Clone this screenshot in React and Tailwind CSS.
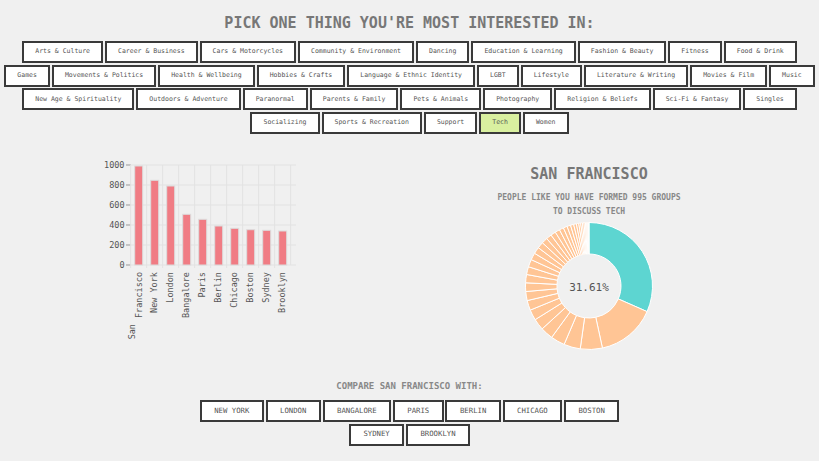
import React from 'react';

const topicRows = [
  ['Arts & Culture', 'Career & Business', 'Cars & Motorcycles', 'Community & Environment', 'Dancing', 'Education & Learning', 'Fashion & Beauty', 'Fitness', 'Food & Drink'],
  ['Games', 'Movements & Politics', 'Health & Wellbeing', 'Hobbies & Crafts', 'Language & Ethnic Identity', 'LGBT', 'Lifestyle', 'Literature & Writing', 'Movies & Film', 'Music'],
  ['New Age & Spirituality', 'Outdoors & Adventure', 'Paranormal', 'Parents & Family', 'Pets & Animals', 'Photography', 'Religion & Beliefs', 'Sci-Fi & Fantasy', 'Singles'],
  ['Socializing', 'Sports & Recreation', 'Support', 'Tech', 'Women']
];

const cities = [
  { name: 'San Francisco', value: 990 },
  { name: 'New York', value: 847 },
  { name: 'London', value: 790 },
  { name: 'Bangalore', value: 507 },
  { name: 'Paris', value: 457 },
  { name: 'Berlin', value: 390 },
  { name: 'Chicago', value: 367 },
  { name: 'Boston', value: 353 },
  { name: 'Sydney', value: 347 },
  { name: 'Brooklyn', value: 340 }
];

const compareRows = [
  ['New York', 'London', 'Bangalore', 'Paris', 'Berlin', 'Chicago', 'Boston'],
  ['Sydney', 'Brooklyn']
];

// share of groups per city, first slice is the selected city
const slices = [
  31.61, 15, 5.6, 4.2, 3.6, 3.2, 2.9, 2.7, 2.5, 2.3, 2.2, 2.1, 2.0, 1.9, 1.8, 1.7, 1.6,
  1.5, 1.4, 1.3, 1.2, 1.1, 1.0, 0.9, 0.8, 0.7, 0.6, 0.5, 0.45, 0.4, 0.35, 0.3, 0.25, 0.2, 0.14
];

const font = { fontFamily: '"DejaVu Sans Mono", "Liberation Mono", monospace' };

const BarChart = () => {
  const base = 109;
  const left = 35.7;
  return (
    <svg width="215" height="190" className="block">
      {[0, 200, 400, 600, 800, 1000].map((t) => (
        <g key={t}>
          <line x1="35.7" x2="201" y1={base - t / 10} y2={base - t / 10} stroke="#e2e2e2" strokeWidth="1" />
          <line x1="31" x2="35.7" y1={base - t / 10} y2={base - t / 10} stroke="#999" strokeWidth="1" />
          <text x="29.5" y={base - t / 10} textAnchor="end" dominantBaseline="central" fontSize="8.5" fill="#555" style={font}>
            {t}
          </text>
        </g>
      ))}
      {cities.map((c, i) => (
        <line key={'g' + i} x1={left + 16 * i} x2={left + 16 * i} y1="9" y2={base + 3} stroke="#e2e2e2" strokeWidth="1" />
      ))}
      <line x1={left + 160} x2={left + 160} y1="9" y2={base} stroke="#e2e2e2" strokeWidth="1" />
      {cities.map((c, i) => (
        <rect
          key={c.name}
          x={left + 4 + 16 * i}
          y={base - c.value / 10}
          width="8"
          height={c.value / 10}
          fill="#f07c84"
          stroke="#dcdcdc"
          strokeWidth="1"
        />
      ))}
      {cities.map((c, i) => {
        const cx = left + 8 + 16 * i - 0.5;
        if (c.name === 'San Francisco') {
          return (
            <g key={'l' + i} fontSize="8.5" fill="#555" style={font}>
              <text x={cx + 0.5} y="116" textAnchor="end" dominantBaseline="central" transform={`rotate(-90 ${cx + 0.5} 116)`}>
                Francisco
              </text>
              <text x={cx - 6.5} y="168" textAnchor="end" dominantBaseline="central" transform={`rotate(-90 ${cx - 6.5} 168)`}>
                San
              </text>
            </g>
          );
        }
        return (
          <text
            key={'l' + i}
            x={cx}
            y="116"
            textAnchor="end"
            dominantBaseline="central"
            fontSize="8.5"
            fill="#555"
            style={font}
            transform={`rotate(-90 ${cx} 116)`}
          >
            {c.name}
          </text>
        );
      })}
    </svg>
  );
};

const Donut = () => {
  const cx = 65;
  const cy = 65;
  const ro = 63.5;
  const ri = 32;
  const total = slices.reduce((a, b) => a + b, 0);
  let acc = 0;
  const pt = (r, a) => [cx + r * Math.sin(a), cy - r * Math.cos(a)];
  return (
    <svg width="130" height="130" className="block">
      {slices.map((v, i) => {
        const a0 = (acc / total) * Math.PI * 2;
        acc += v;
        const a1 = (acc / total) * Math.PI * 2;
        const large = a1 - a0 > Math.PI ? 1 : 0;
        const [x0, y0] = pt(ro, a0);
        const [x1, y1] = pt(ro, a1);
        const [x2, y2] = pt(ri, a1);
        const [x3, y3] = pt(ri, a0);
        const d = `M${x0},${y0} A${ro},${ro} 0 ${large} 1 ${x1},${y1} L${x2},${y2} A${ri},${ri} 0 ${large} 0 ${x3},${y3} Z`;
        return <path key={i} d={d} fill={i === 0 ? '#5dd5d1' : '#ffc595'} stroke="#fff" strokeWidth="1" />;
      })}
      <text x={cx} y={cy + 1} textAnchor="middle" dominantBaseline="central" fontSize="11" fill="#555" style={font}>
        31.61%
      </text>
    </svg>
  );
};

export default function App() {
  return (
    <div className="min-h-screen w-full bg-[#f0f0f0] text-[#555]" style={font}>
      {/* Topic picker */}
      <h1 className="pt-[14px] text-center text-[15px] leading-[18px] font-bold text-[#777]">
        PICK ONE THING YOU'RE MOST INTERESTED IN:
      </h1>
      <div className="mt-[9px] flex flex-col gap-[1.7px]">
        {topicRows.map((row, r) => (
          <div key={r} className="flex justify-center gap-[2px]">
            {row.map((t) => (
              <button
                key={t}
                className={`h-[22px] px-[11px] border-2 border-[#3a3a3a] text-[6.5px] whitespace-nowrap text-[#555] ${
                  t === 'Tech' ? 'bg-[#d9f0a0]' : 'bg-white'
                }`}
              >
                {t}
              </button>
            ))}
          </div>
        ))}
      </div>

      {/* Charts */}
      <div className="mt-[22px] flex items-start pl-[95px] gap-[179px]">
        <BarChart />
        <div className="mt-[9px] w-[200px] flex flex-col items-center">
          <h2 className="text-[15px] leading-[18px] font-bold text-[#777]">SAN FRANCISCO</h2>
          <p className="mt-[8px] text-[8px] leading-[14px] font-bold text-[#888] text-center whitespace-nowrap">
            PEOPLE LIKE YOU HAVE FORMED 995 GROUPS
            <br />
            TO DISCUSS TECH
          </p>
          <div className="mt-[2px]">
            <Donut />
          </div>
        </div>
      </div>

      {/* Compare */}
      <p className="mt-[29px] text-center text-[9px] leading-[12px] font-bold text-[#888]">
        COMPARE SAN FRANCISCO WITH:
      </p>
      <div className="mt-[8px] flex flex-col gap-[1.7px]">
        {compareRows.map((row, r) => (
          <div key={r} className="flex justify-center gap-[1.7px]">
            {row.map((c) => (
              <button
                key={c}
                className="h-[22px] px-[12.5px] border-2 border-[#3a3a3a] bg-white text-[7.3px] uppercase whitespace-nowrap text-[#555]"
              >
                {c}
              </button>
            ))}
          </div>
        ))}
      </div>
    </div>
  );
}
